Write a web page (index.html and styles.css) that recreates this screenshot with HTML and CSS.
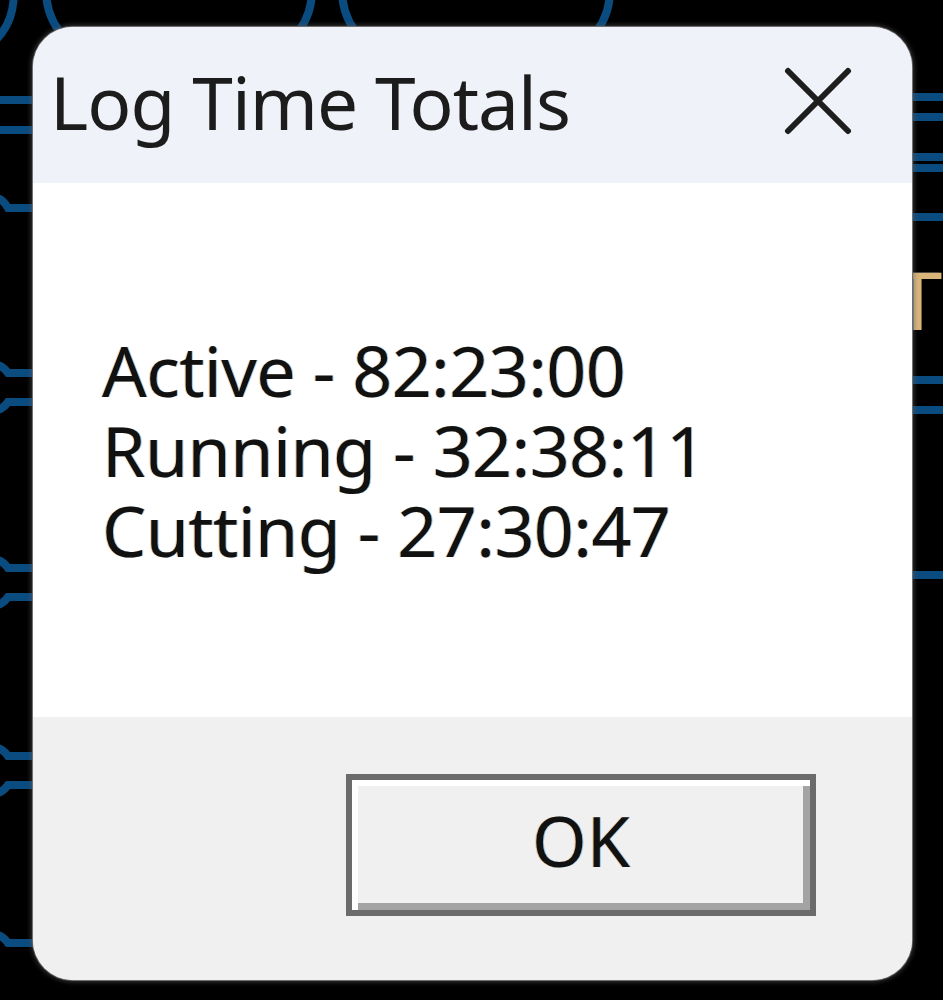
FILE: index.html
```html
<!DOCTYPE html>
<html lang="en">

<head>
    <meta charset="UTF-8">
    <meta name="viewport" content="width=device-width, initial-scale=1.0">
    <title>Log Time Totals</title>
    <link rel="stylesheet" href="styles.css">
</head>

<body>
    <!-- parent window peeking out behind the dialog -->
    <svg class="backdrop" width="943" height="1000" viewBox="0 0 943 1000" fill="none" stroke="#0a4b80" stroke-width="8">
        <path d="M14 -10 C14 10 10 25 -4 40" />
        <rect x="46" y="-240" width="266" height="300" rx="70" />
        <rect x="342" y="-240" width="268" height="300" rx="70" />
        <path d="M-4 100 H40 M-4 130 H40" />
        <path d="M-4 198 q6 0 12 10 H40" />
        <path d="M-4 365 q6 0 12 8 H40 M-4 410 q6 0 12 -8 H40" />
        <path d="M-4 560 q6 0 12 8 H40 M-4 605 q6 0 12 -8 H40" />
        <path d="M-4 748 q6 0 12 8 H40 M-4 793 q6 0 12 -8 H40" />
        <path d="M-4 935 q6 0 12 8 H40" />
        <path d="M900 97 H950 M900 117 H950 M900 157 H950 M900 168 H950 M900 217 H950" />
        <path d="M900 380 H950 M900 410 H950 M900 575 H950" />
    </svg>
    <span class="backdrop-glyph">T</span>

    <div class="dialog">
        <div class="dialog-titlebar">
            <span class="dialog-title">Log Time Totals</span>
            <button class="dialog-close" aria-label="Close">
                <svg width="68" height="68" viewBox="0 0 68 68" fill="none" stroke="currentColor" stroke-width="6" stroke-linecap="round">
                    <path d="M4 4L64 64M64 4L4 64" />
                </svg>
            </button>
        </div>

        <div class="dialog-body">
            <p>Active - 82:23:00</p>
            <p>Running - 32:38:11</p>
            <p>Cutting - 27:30:47</p>
        </div>

        <div class="dialog-footer">
            <button class="btn-ok">OK</button>
        </div>
    </div>
</body>

</html>
```

FILE: styles.css
```css
:root {
    --titlebar-bg: #eff2f9;
    --body-bg: #ffffff;
    --footer-bg: #f0f0f0;
    --text: #111111;
    --accent-blue: #0a4b80;
}

* {
    margin: 0;
    padding: 0;
    box-sizing: border-box;
}

body {
    width: 943px;
    height: 1000px;
    background: #000;
    font-family: "Noto Sans", "Open Sans", sans-serif;
    color: var(--text);
    padding: 27px 0 0 33px;
    overflow: hidden;
    position: relative;
}

.backdrop {
    position: absolute;
    top: 0;
    left: 0;
}

.backdrop-glyph {
    position: absolute;
    top: 259px;
    left: 892px;
    font-family: "Liberation Sans", sans-serif;
    font-size: 84px;
    line-height: 1;
    color: #d9b57a;
    text-shadow: -2px 0 #5a7bb0;
}

.dialog {
    position: relative;
    z-index: 1;
    width: 879px;
    height: 953px;
    border-radius: 40px;
    overflow: hidden;
    display: flex;
    flex-direction: column;
    background: var(--body-bg);
    box-shadow: 0 0 0 1px #6f6f6f, 0 0 5px 2px rgba(90, 90, 90, 0.6);
}

.dialog-titlebar {
    height: 156px;
    background: var(--titlebar-bg);
    display: flex;
    align-items: center;
    padding: 0 60px 8px 17px;
}

.dialog-title {
    font-size: 73px;
    color: #1c1c1c;
    letter-spacing: -1px;
}

.dialog-close {
    margin-left: auto;
    border: none;
    background: none;
    color: #1e1e1e;
    display: flex;
}

.dialog-body {
    height: 534px;
    display: flex;
    flex-direction: column;
    justify-content: center;
    padding-left: 69px;
    font-size: 70px;
    line-height: 80px;
    letter-spacing: -0.6px;
    text-shadow: -1px 0 rgba(230, 140, 20, 0.45), 1px 0 rgba(20, 140, 230, 0.45);
}

.dialog-footer {
    flex: 1;
    background: var(--footer-bg);
    display: flex;
    justify-content: flex-end;
    align-items: flex-start;
    padding: 57px 96px 0 0;
}

.btn-ok {
    width: 470px;
    height: 142px;
    padding-bottom: 10px;
    font-family: inherit;
    font-size: 70px;
    color: var(--text);
    background: var(--footer-bg);
    border: 6px solid #6b6b6b;
    box-shadow: inset 6px 6px 0 #ffffff, inset -7px -7px 0 #a3a3a3;
    text-shadow: -1px 0 rgba(230, 140, 20, 0.45), 1px 0 rgba(20, 140, 230, 0.45);
}
```
